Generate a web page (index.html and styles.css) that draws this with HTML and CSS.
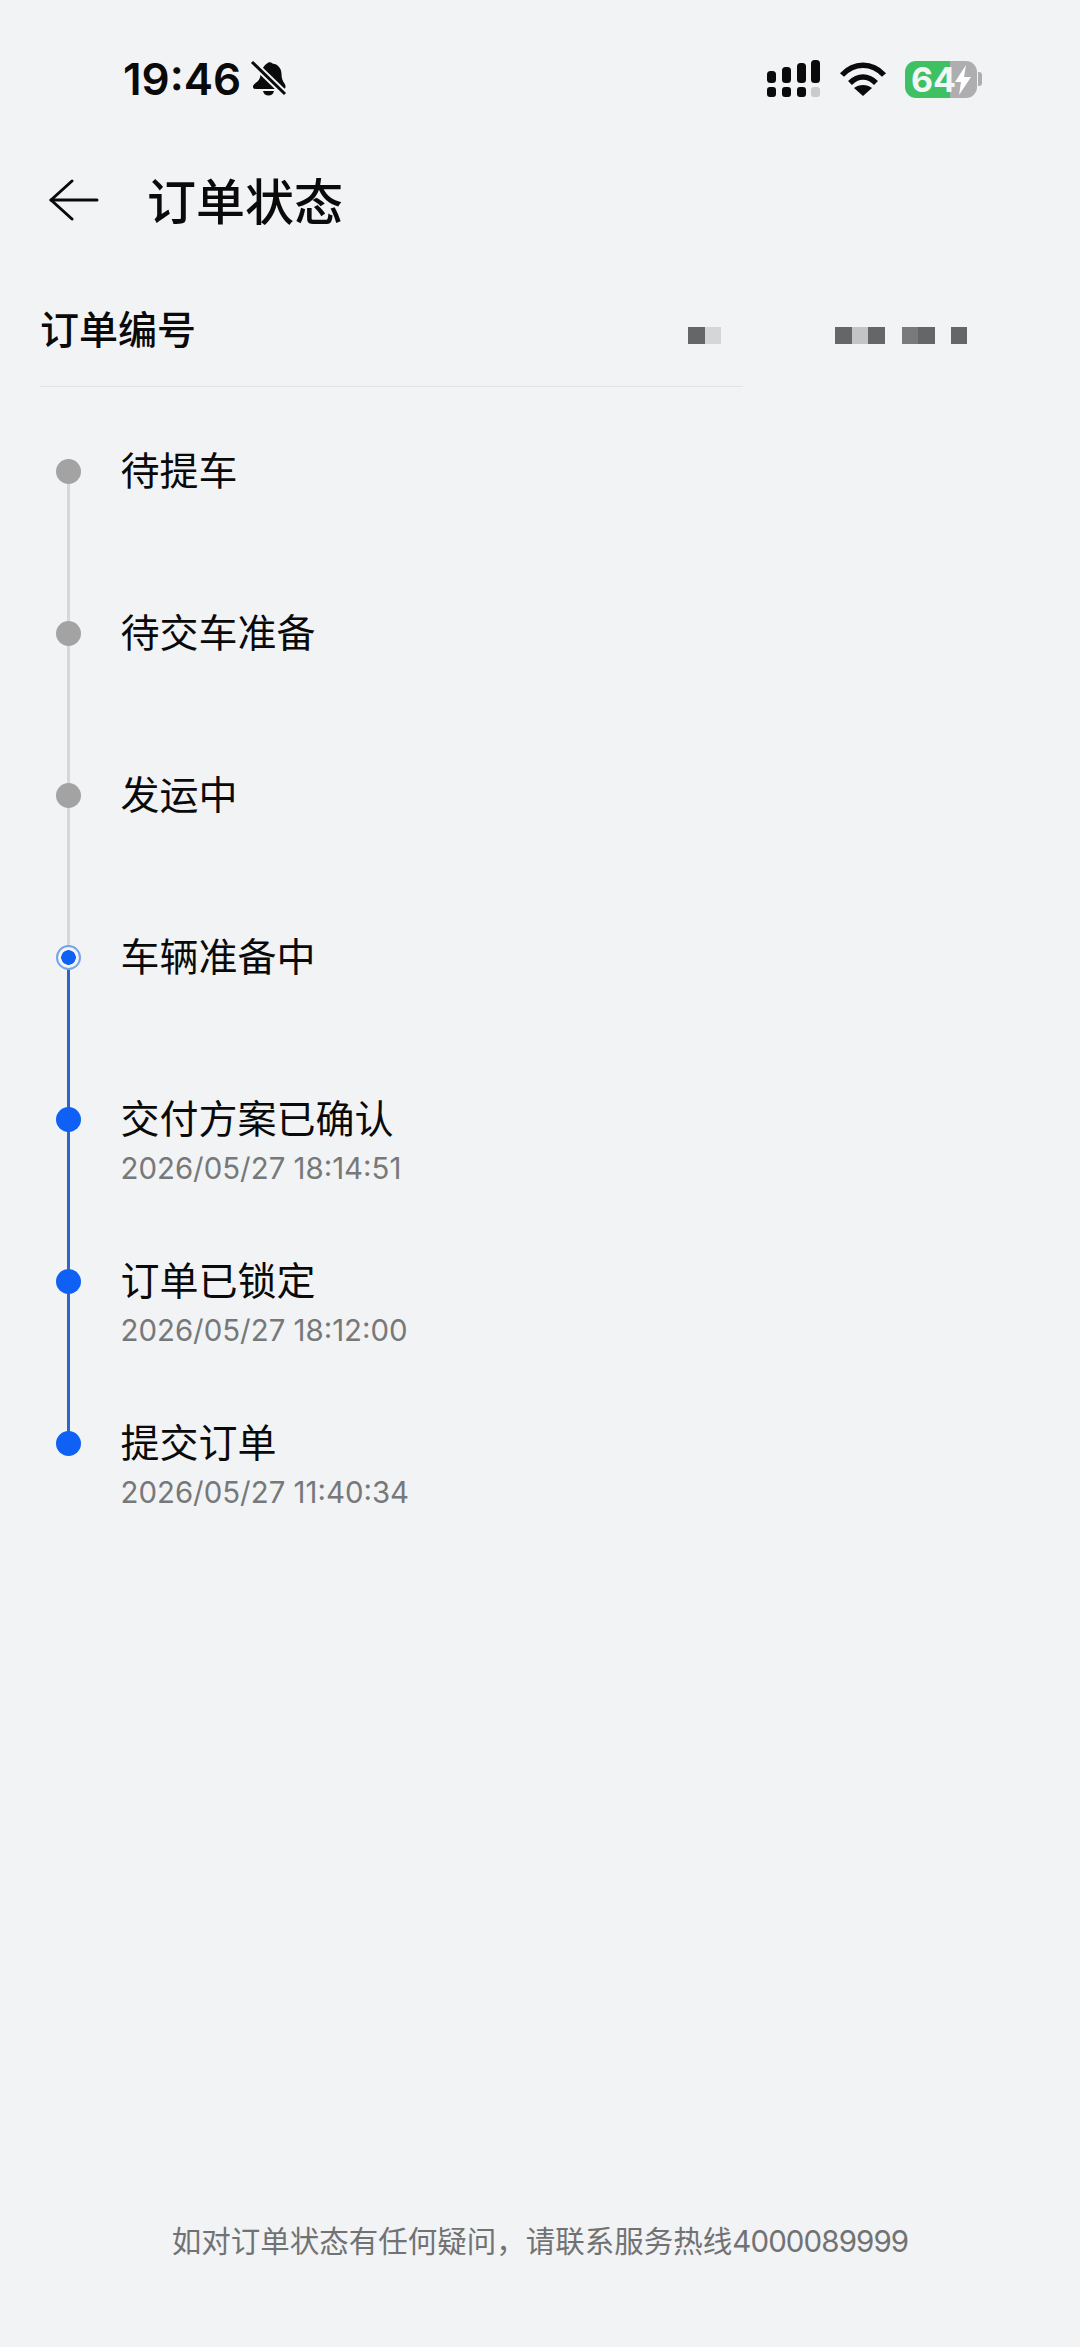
FILE: index.html
```html
<!DOCTYPE html>
<html lang="zh-CN">
<head>
    <meta charset="UTF-8">
    <meta name="viewport" content="width=device-width, initial-scale=1.0">
    <title>订单状态</title>
    <link rel="stylesheet" href="styles.css">
</head>
<body>
    <div class="page">
        <div class="status-bar">
            <div class="status-left">
                <span class="clock">19:46</span>
                <svg class="bell" width="38" height="38" viewBox="0 0 38 38">
                    <path d="M17 3.5c1.6-1.6 4-1.4 5.5 0 5.6 0.6 9 5 9 10.500 0 4 1 7 3 9.500 1.500 2 1.500 5 -1 5.500H6c-3 0-4-2.500-2-4.500 2.500-2.500 5-3.500 6-7 1-3.500 1-10 7-14z" fill="#0a0a0a"/>
                    <path d="M13 31h11c-.5 3-3 4.500-5.500 4.500S13.500 34 13 31z" fill="#0a0a0a"/>
                    <path d="M2 2l33 32" stroke="#f2f3f5" stroke-width="7"/>
                    <path d="M2 2l33 32" stroke="#0a0a0a" stroke-width="3"/>
                </svg>
            </div>
            <div class="status-right">
                <svg width="54" height="38" viewBox="0 0 54 38" fill="#0a0a0a">
                    <rect x="0" y="11" width="9" height="12" rx="3.500"/>
                    <rect x="15" y="7" width="9" height="16" rx="3.500"/>
                    <rect x="30" y="3" width="9" height="20" rx="3.500"/>
                    <rect x="44" y="0" width="9" height="23" rx="3.500"/>
                    <rect x="0" y="27" width="9" height="10" rx="3"/>
                    <rect x="15" y="27" width="9" height="10" rx="3"/>
                    <rect x="30" y="27" width="9" height="10" rx="3"/>
                    <rect x="44" y="27" width="9" height="10" rx="3" fill="#c9cacc"/>
                </svg>
                <svg class="wifi" width="48" height="36" viewBox="0 0 48 36" fill="none" stroke="#0a0a0a" stroke-width="5.500">
                    <path d="M3 14C15 1 33 1 45 14"/>
                    <path d="M11 22c8-8 18-8 26 0"/>
                    <path d="M24 35l-9-8c5-4 13-4 18 0z" fill="#0a0a0a" stroke="none"/>
                </svg>
                <div class="battery">
                    <div class="battery-body">
                        <span class="battery-num">64</span>
                        <svg class="bolt" width="18" height="30" viewBox="0 0 18 30">
                            <path d="M12 0L1 17h6L5 30l12-18h-7z" fill="#fff"/>
                        </svg>
                    </div>
                    <div class="battery-nub"></div>
                </div>
            </div>
        </div>

        <div class="header">
            <svg class="back" width="50" height="42" viewBox="0 0 50 42" fill="none" stroke="#0a0a0a" stroke-width="3" stroke-linecap="round" stroke-linejoin="round">
                <path d="M48 21H2"/>
                <path d="M23 2L2 21l21 19"/>
            </svg>
            <h1>订单状态</h1>
        </div>

        <div class="order-row">
            <span class="order-label">订单编号</span>
            <div class="mosaic">
                <i class="px dark"></i><i class="px light gap-a"></i>
                <i class="px dark"></i><i class="px mid-light"></i><i class="px dark gap-b"></i>
                <i class="px mid"></i><i class="px dark gap-c"></i>
                <i class="px dark"></i>
            </div>
        </div>

        <div class="timeline">
            <div class="step line-gray">
                <div class="marker gray"></div>
                <div class="step-text"><div class="step-title">待提车</div></div>
            </div>
            <div class="step line-gray">
                <div class="marker gray"></div>
                <div class="step-text"><div class="step-title">待交车准备</div></div>
            </div>
            <div class="step line-gray">
                <div class="marker gray"></div>
                <div class="step-text"><div class="step-title">发运中</div></div>
            </div>
            <div class="step line-blue">
                <div class="marker current"></div>
                <div class="step-text"><div class="step-title">车辆准备中</div></div>
            </div>
            <div class="step line-blue">
                <div class="marker blue"></div>
                <div class="step-text">
                    <div class="step-title">交付方案已确认</div>
                    <div class="step-time">2026/05/27 18:14:51</div>
                </div>
            </div>
            <div class="step line-blue">
                <div class="marker blue"></div>
                <div class="step-text">
                    <div class="step-title">订单已锁定</div>
                    <div class="step-time">2026/05/27 18:12:00</div>
                </div>
            </div>
            <div class="step">
                <div class="marker blue"></div>
                <div class="step-text">
                    <div class="step-title">提交订单</div>
                    <div class="step-time">2026/05/27 11:40:34</div>
                </div>
            </div>
        </div>

        <div class="footer">如对订单状态有任何疑问，请联系服务热线<span class="hotline">4000089999</span></div>
    </div>
</body>
</html>
```

FILE: styles.css
```css
* {
    box-sizing: border-box;
}

body {
    margin: 0;
    background-color: #f2f3f5;
    color: #0a0a0a;
    font-family: "Noto Sans CJK SC", "Noto Sans", sans-serif;
}

.page {
    display: flex;
    flex-direction: column;
    height: 2347px;
    overflow: hidden;
}

.status-bar {
    display: flex;
    justify-content: space-between;
    align-items: center;
    height: 158px;
    padding: 0 98px 0 123px;
}

.status-left {
    display: flex;
    align-items: center;
    gap: 9px;
}

.clock {
    font-family: Inter, sans-serif;
    font-size: 44px;
    font-weight: 600;
    line-height: 50px;
}

.status-right {
    display: flex;
    align-items: center;
    gap: 18px;
}

.battery {
    display: flex;
    align-items: center;
    gap: 1px;
}

.battery-body {
    position: relative;
    display: flex;
    align-items: center;
    width: 72px;
    height: 37px;
    padding-left: 6px;
    border-radius: 11px;
    background: linear-gradient(90deg, #3fc163 0, #3fc163 45px, #aeaeb0 45px);
}

.battery-num {
    font-family: Inter, sans-serif;
    font-size: 34px;
    font-weight: 700;
    line-height: 37px;
    color: #f4f6f5;
}

.bolt {
    position: absolute;
    right: 5px;
    top: 4px;
}

.battery-nub {
    width: 4px;
    height: 14px;
    border-radius: 0 3px 3px 0;
    background-color: #aeaeb0;
}

.header {
    display: flex;
    align-items: center;
    height: 84px;
    padding-left: 49px;
}

.header h1 {
    margin: 0 0 0 48px;
    font-size: 49px;
    font-weight: 500;
    line-height: 60px;
    position: relative;
    top: -1px;
}

.order-row {
    display: flex;
    align-items: center;
    width: 703px;
    height: 145px;
    margin-left: 40px;
    padding-top: 26px;
    border-bottom: 1px solid #e2e3e6;
}

.order-label {
    font-size: 39px;
    font-weight: 500;
    line-height: 50px;
}

.mosaic {
    position: absolute;
    left: 688px;
    top: 327px;
    display: flex;
}

.px {
    display: block;
    width: 16.500px;
    height: 17px;
}

.dark {
    background-color: #666;
}

.mid {
    background-color: #7a7a7a;
}

.mid-light {
    background-color: #c4c4c4;
}

.light {
    background-color: #d6d6d6;
}

.gap-a {
    margin-right: 114px;
}

.gap-b {
    margin-right: 17px;
}

.gap-c {
    margin-right: 16px;
}

.timeline {
    padding-top: 57px;
}

.step {
    position: relative;
    display: flex;
    height: 162px;
    padding-left: 56px;
}

/* linha entre um ponto e o proximo */
.step::after {
    content: "";
    position: absolute;
    left: 67px;
    top: 27px;
    width: 3px;
    height: 162px;
}

.line-gray::after {
    background-color: #d6d7da;
}

.line-blue::after {
    background-color: #2d66c8;
}

.marker {
    position: relative;
    z-index: 1;
    flex: none;
    width: 25px;
    height: 25px;
    margin-top: 15px;
    border-radius: 50%;
}

.gray {
    background-color: #a3a3a4;
}

.blue {
    background-color: #0f60f5;
}

.current {
    border: 2px solid #74a3ee;
    background: radial-gradient(circle, #0f60f5 0, #0f60f5 7px, #f2f3f5 7.500px);
}

.step-text {
    margin-left: 39.500px;
    margin-top: -3px;
}

.step-title {
    font-size: 39px;
    line-height: 54px;
}

.step-time {
    font-family: Inter, sans-serif;
    font-size: 29.400px;
    font-weight: 400;
    line-height: 52px;
    color: #77787a;
}

.footer {
    margin-top: auto;
    padding-bottom: 84px;
    font-family: Inter, "Noto Sans CJK SC", sans-serif;
    font-size: 29.500px;
    line-height: 44px;
    text-align: center;
    color: #717274;
}

.hotline {
    letter-spacing: -0.9px;
}
```
